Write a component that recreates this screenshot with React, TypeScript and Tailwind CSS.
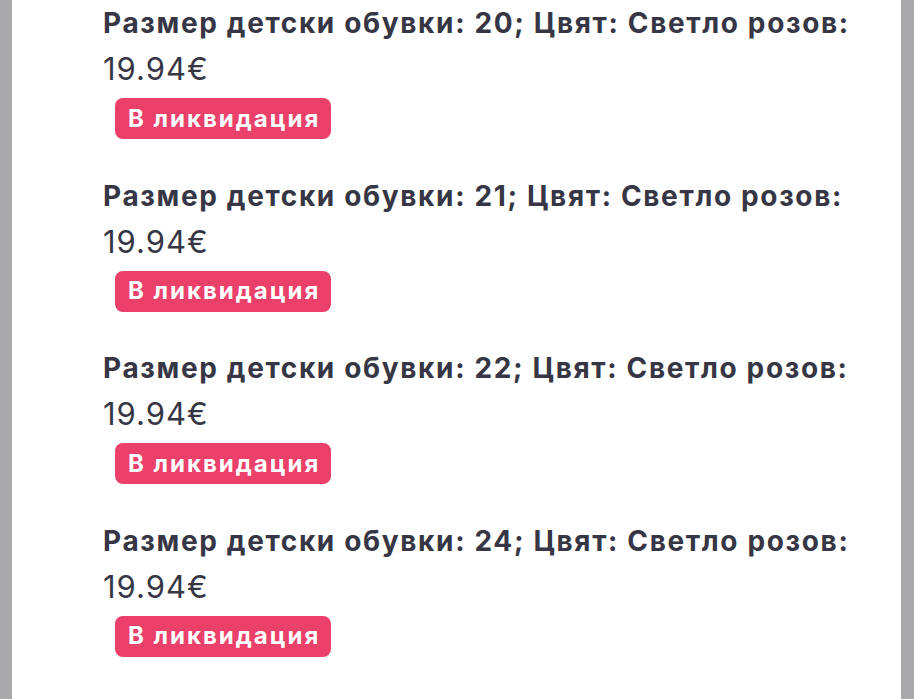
import React from 'react';

const sizes = [20, 21, 22, 24];

const App: React.FC = () => {
  return (
    <div className="flex h-[699px] w-full overflow-hidden bg-white" style={{ fontFamily: 'Inter, "Noto Sans", sans-serif' }}>
      <div className="w-[12px] shrink-0 bg-[#a9a9ab]" />
      <div className="flex-1 pl-[91px] pt-[2px]">
        {sizes.map((s) => (
          <div key={s} className="h-[172.5px]">
            <p className="text-[28px] leading-[43px] font-bold tracking-[1.65px] text-[#363645] whitespace-nowrap">
              Размер детски обувки: {s}; Цвят: Светло розов:
            </p>
            <p className="mt-[2px] text-[31px] leading-[43px] tracking-[1px] text-[#363645]">19.94€</p>
            <span className="mt-[8px] ml-[12px] inline-flex h-[41px] items-center rounded-[8px] bg-[#ea4069] pl-[13px] pr-[11px] text-[24px] font-bold tracking-[2px] text-white">
              В ликвидация
            </span>
          </div>
        ))}
      </div>
      <div className="w-[13px] shrink-0 bg-[#a9a9ab]" />
    </div>
  );
};

export default App;
